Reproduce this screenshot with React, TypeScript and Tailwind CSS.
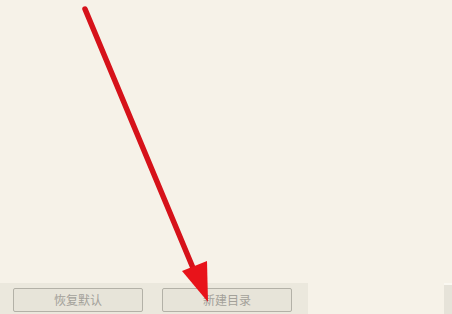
export default function App() {
  return (
    <div className="relative h-[314px] w-[452px] overflow-hidden bg-[#f6f2e8] font-['Noto_Sans_CJK_SC',sans-serif]">
      <div className="flex h-full flex-col">
        <div className="flex-1" />
        <div className="flex h-[31px] items-start">
          <div className="flex h-full w-[308px] gap-[19px] bg-[#ebe8dd] pl-[13px] pt-[5px]">
            <button className="flex h-[24px] w-[130px] items-center justify-center rounded-[2px] border border-[#b3b1a7] bg-[#e7e4d9] text-[12px] text-[#a3a199]">
              恢复默认
            </button>
            <button className="flex h-[24px] w-[130px] items-center justify-center rounded-[2px] border border-[#b3b1a7] bg-[#e7e4d9] text-[12px] text-[#a3a199]">
              新建目录
            </button>
          </div>
          <div className="flex-1" />
          <div className="h-full w-[8px] border-t-2 border-[#faf8f1] bg-[#e6e3d9]" />
        </div>
      </div>
      <svg className="absolute left-0 top-0" width="452" height="314" viewBox="0 0 452 314">
        <line x1="85" y1="9" x2="193" y2="268" stroke="#d6121a" strokeWidth="5.5" strokeLinecap="round" />
        <polygon points="182,271 207,261 208,302" fill="#e8131a" />
      </svg>
    </div>
  );
}
